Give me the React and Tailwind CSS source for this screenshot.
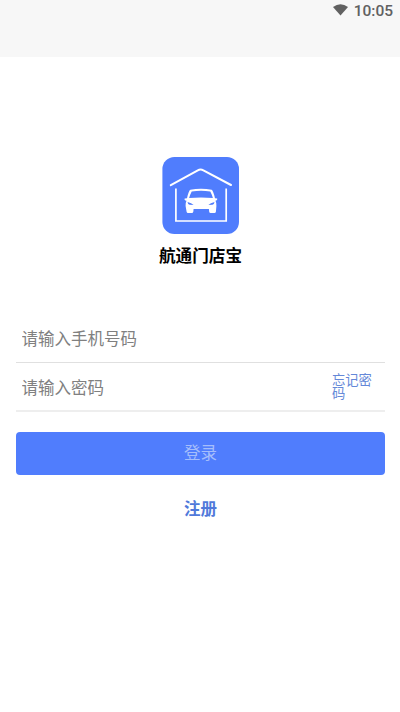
const Logo = () => (
    <svg className="w-[77px] h-[77px]" viewBox="0 0 77 77" fill="none">
        <rect x="0.4" width="76.6" height="77" rx="12" fill="#507dfd" />
        <path d="M8.8 28.2 35.8 13.3Q38.6 11.8 41.4 13.3L69 28" stroke="#fff" strokeWidth="2" strokeLinecap="round" />
        <path d="M13.9 31.5V64H64.2V31.5" stroke="#fff" strokeWidth="1.7" />
        {/* car */}
        <path
            fill="#fff"
            fillRule="evenodd"
            d="M28.3 32.8Q39 30.8 49.7 32.8Q51.1 33.4 53 41.2L55.2 41.4Q55.9 43.2 53.5 43.8Q54.8 46.4 54.4 49L53.9 54.7Q53.7 55.9 52.4 55.9H48.6Q47.4 55.9 47.2 54.7L46.9 52H31.6L31.3 54.7Q31.1 55.9 29.8 55.9H26Q24.8 55.9 24.6 54.7L23.6 49Q23.2 46.4 24.5 43.8Q21.9 43.2 22.7 41.4L25 41.2Q26.8 33.4 28.3 32.8ZM29.7 34.4Q28.1 37.4 27.1 41Q39 39.8 50.9 41Q49.9 37.4 48.3 34.4Q39 32.9 29.7 34.4ZM25.5 44.9Q25.8 47.4 27.6 47.7L31.6 47.9Q29.6 45.7 25.5 44.9ZM52.5 44.9Q48.4 45.7 46.4 47.9L50.4 47.7Q52.2 47.4 52.5 44.9Z"
        />
    </svg>
);

const StatusBar = () => (
    <header className="h-[57px] bg-[#f7f7f7] flex items-start justify-end pt-[3px] pr-[7px]">
        <svg className="w-[15px] h-[12px] mt-px mr-[6px]" viewBox="0 0 15 12">
            <path d="M0 2.9Q7.5-2.4 15 2.9L7.5 11.5Z" fill="#616161" />
        </svg>
        <span className="font-[Roboto,sans-serif] font-medium text-[15.5px] leading-4 text-[#616161]">10:05</span>
    </header>
);

const App = () => {
    return (
        <div className="h-[712px] bg-white font-['Noto_Sans_CJK_SC',sans-serif] text-[16.5px]">
            <StatusBar />

            <main className="pl-4 pr-[15px]">
                <div className="pt-[100px] flex flex-col items-center">
                    <Logo />
                    <h1 className="mt-[9px] text-[16.6px] leading-6 font-bold text-black">航通门店宝</h1>
                </div>

                <form className="mt-[47px]">
                    <div className="h-[49px] border-b border-[#e0e0e0] flex items-center pl-[5.5px]">
                        <input
                            type="tel"
                            placeholder="请输入手机号码"
                            className="w-full h-6 leading-6 outline-none placeholder:text-[#808080]"
                        />
                    </div>
                    <div className="h-[49px] border-b-2 border-[#eeeeee] flex items-center pl-[5.5px] pr-[12px]">
                        <input
                            type="password"
                            placeholder="请输入密码"
                            className="flex-1 min-w-0 h-6 leading-6 outline-none placeholder:text-[#808080]"
                        />
                        <a href="#" className="w-[41px] pb-[2px] text-[13.3px] leading-[13px] text-[#6488d8]">忘记密码</a>
                    </div>
                    <button
                        type="button"
                        className="mt-[20px] w-full h-[43px] pb-[3px] rounded-[4px] bg-[#507dfd] text-[#a5bdfb]"
                    >
                        登录
                    </button>
                </form>

                <a href="#" className="mt-[21px] block text-center leading-6 font-bold text-[#5079da]">注册</a>
            </main>
        </div>
    );
};

export default App;
